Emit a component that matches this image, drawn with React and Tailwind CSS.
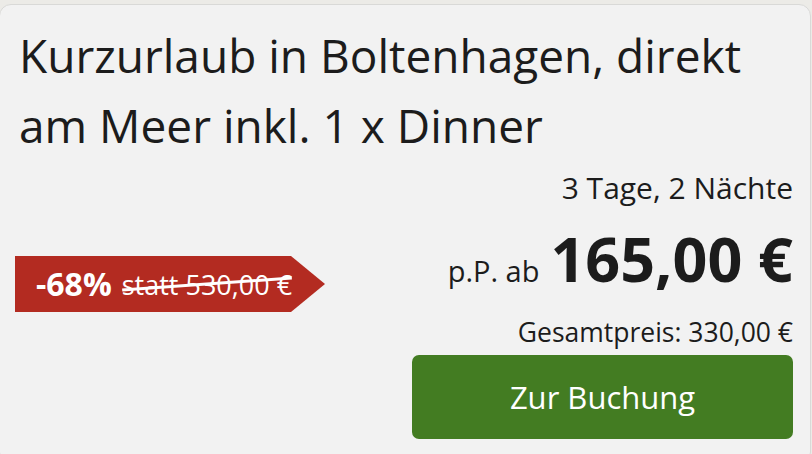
export default function App() {
  const font = { fontFamily: '"Open Sans", "Noto Sans", sans-serif' };
  return (
    <div className="w-[812px] h-[454px] overflow-hidden bg-[#ecebe7] pt-[4px]" style={font}>
      <div className="-ml-px w-[812px] h-[460px] rounded-[12px] border border-[#d9d9d7] bg-[#f2f2f2] pl-[19px] pr-[17px] pt-[15px] text-[#1c1c1c]">
        <h1 className="text-[46px] leading-[70px] font-normal">
          Kurzurlaub in Boltenhagen, direkt am Meer inkl. 1 x Dinner
        </h1>
        <div className="flex justify-between">
          <div className="mt-[96px] -ml-[4px]">
            <div className="flex h-[56px] w-[310px] items-center bg-[#b32b21] pl-[21px] text-white [clip-path:polygon(0_0,276px_0,310px_50%,276px_100%,0_100%)]">
              <span className="text-[32px] font-bold leading-none">-68%</span>
              <span className="relative ml-[10px] text-[27px] leading-none">
                statt 530,00 €
                <span className="absolute left-0 right-0 top-[50%] h-[3px] -translate-y-1/2 -rotate-[4deg] bg-white" />
              </span>
            </div>
          </div>
          <div className="flex w-[381px] flex-col items-end">
            <div className="mt-[10px] text-[30px] leading-[36px]">3 Tage, 2 Nächte</div>
            <div className="mt-[21px] flex items-baseline h-[64px]">
              <span className="text-[29px] leading-[64px]">p.P. ab</span>
              <span className="ml-[11px] text-[61px] font-bold leading-[64px]">165,00 €</span>
            </div>
            <div className="mt-[26px] text-[26.5px] leading-[30px]">Gesamtpreis: 330,00 €</div>
            <button className="mt-[8px] flex h-[84px] w-[381px] items-center justify-center rounded-[7px] bg-[#437c22] text-[31px] text-white">
              Zur Buchung
            </button>
          </div>
        </div>
      </div>
    </div>
  );
}
